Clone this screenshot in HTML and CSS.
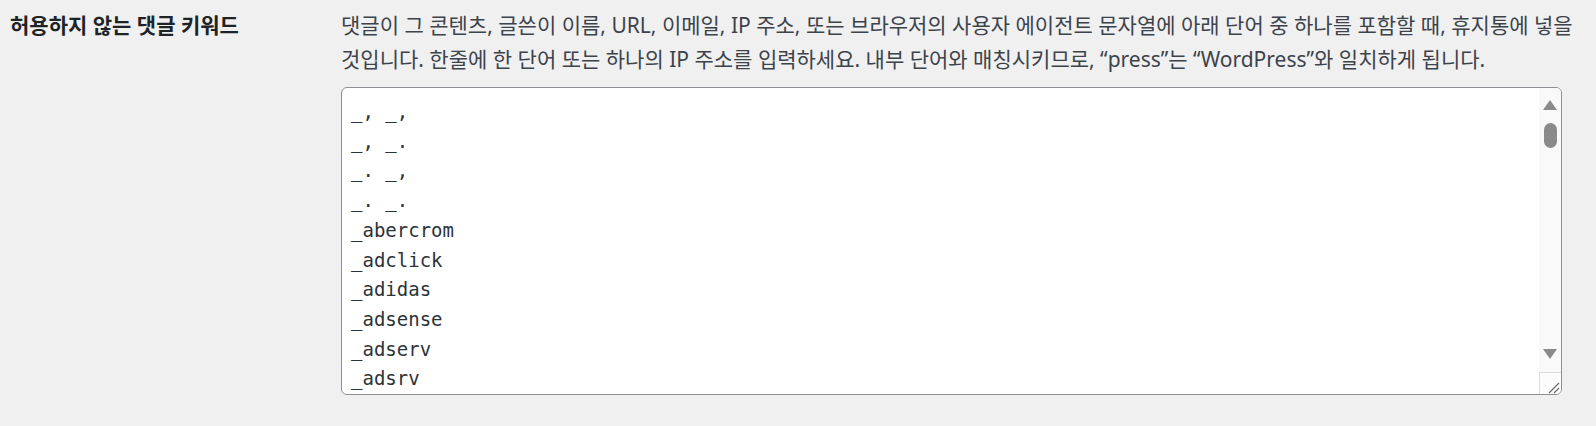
FILE: index.html
```html
<!DOCTYPE html>
<html lang="ko">
<head>
  <meta charset="UTF-8">
  <meta name="viewport" content="width=device-width, initial-scale=1.0">
  <title>토론 설정</title>
  <link rel="stylesheet" href="styles.css">
</head>
<body>
  <main class="form-row">
    <div class="row-label">
      <label for="disallowed_keys">허용하지 않는 댓글 키워드</label>
    </div>
    <div class="row-field">
      <p class="description">댓글이 그 콘텐츠, 글쓴이 이름, URL, 이메일, IP 주소, 또는 브라우저의 사용자 에이전트 문자열에 아래 단어 중 하나를 포함할 때, 휴지통에 넣을 것입니다. 한줄에 한 단어 또는 하나의 IP 주소를 입력하세요. 내부 단어와 매칭시키므로, “press”는 “WordPress”와 일치하게 됩니다.</p>
      <div class="keys-box">
        <textarea name="disallowed_keys" id="disallowed_keys" spellcheck="false">_, _,
_, _.
_. _,
_. _.
_abercrom
_adclick
_adidas
_adsense
_adserv
_adsrv
_adtrack
_affiliate
_amazon</textarea>
        <div class="scrollbar" aria-hidden="true">
          <span class="arrow up"></span>
          <span class="thumb"></span>
          <span class="arrow down"></span>
        </div>
        <div class="resizer" aria-hidden="true">
          <svg width="22" height="22" viewBox="0 0 22 22">
            <path d="M9 20 L19 10 M14 20 L19 15" stroke="#6b6b6b" stroke-width="1.2" fill="none"/>
          </svg>
        </div>
      </div>
    </div>
  </main>
</body>
</html>
```

FILE: styles.css
```css
body{
  margin: 0;
  background-color: #f0f0f1;
  color: #3c434a;
  font-family: "Segoe UI", "Noto Sans", "Noto Sans CJK KR", sans-serif;
}

.form-row{
  display: grid;
  grid-template-columns: 331px 1232px;
  padding: 9px 0 0 10px;
}

.row-label label{
  display: block;
  color: #1d2327;
  font-size: 21px;
  font-weight: 700;
  line-height: 33px;
}

.description{
  margin: 0;
  font-size: 21px;
  line-height: 33.5px;
}

.keys-box{
  position: relative;
  width: 1221px;
  margin-top: 11px;
  height: 308px;
}

textarea{
  display: block;
  box-sizing: border-box;
  width: 100%;
  height: 100%;
  margin: 0;
  padding: 9px 30px 0 9px;
  border: 1px solid #8c8f94;
  border-radius: 6px;
  background-color: white;
  color: #2c3338;
  font-family: Consolas, "DejaVu Sans Mono", monospace;
  font-size: 19px;
  line-height: 29.7px;
  overflow: hidden;
  resize: none;
  outline: none;
}

.scrollbar{
  position: absolute;
  top: 1px;
  right: 1px;
  width: 22px;
  height: 284px;
  background-color: #f9f9f9;
  border-top-right-radius: 5px;
}

.arrow{
  position: absolute;
  left: 4px;
  width: 0;
  height: 0;
  border-left: 7px solid transparent;
  border-right: 7px solid transparent;
}

.arrow.up{
  top: 12px;
  border-bottom: 10px solid #8a8a8a;
}

.arrow.down{
  top: 261px;
  border-top: 10px solid #8a8a8a;
}

.thumb{
  position: absolute;
  top: 35px;
  left: 5px;
  width: 13px;
  height: 25px;
  border-radius: 7px;
  background-color: #8a8a8a;
}

.resizer{
  position: absolute;
  right: 1px;
  bottom: 1px;
  width: 22px;
  height: 22px;
  box-sizing: border-box;
  border-top: 1px solid #dcdcdc;
  border-left: 1px solid #dcdcdc;
  background-color: #fcfcfc;
  border-bottom-right-radius: 5px;
}

.resizer svg{
  display: block;
}
```
